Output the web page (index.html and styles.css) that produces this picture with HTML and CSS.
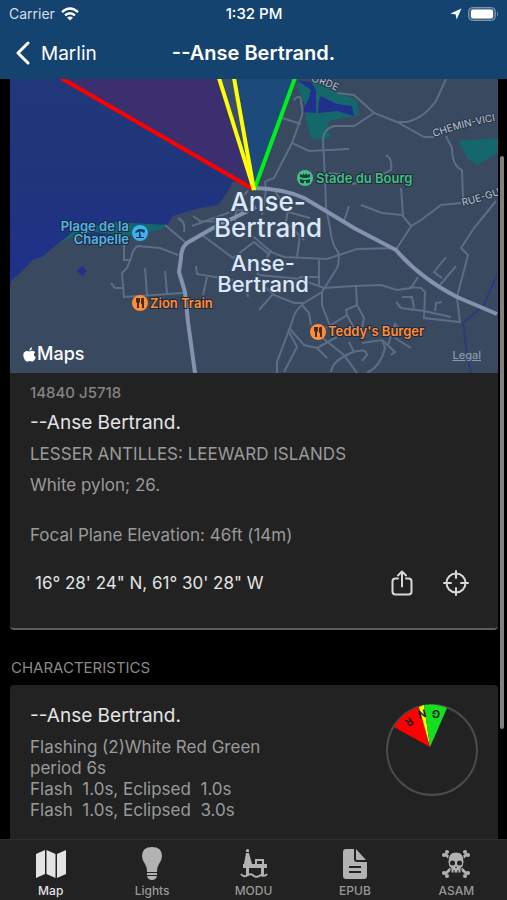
FILE: index.html
```
<!DOCTYPE html>
<html lang="en">
  <head>
    <meta charset="UTF-8" />
    <meta name="viewport" content="width=device-width, initial-scale=1.0" />
    <title>--Anse Bertrand.</title>
    <link rel="stylesheet" href="styles.css">
  </head>
  <body>
    <header>
      <div class="status-bar">
        <div class="carrier">
          <span>Carrier</span>
          <svg width="18" height="14" viewBox="0 0 18 14" fill="none" stroke="#fff" stroke-width="2.4">
            <path d="M1 5.2 Q9 -2 17 5.2" />
            <path d="M4 8.4 Q9 4 14 8.4" />
            <path d="M9 13.4 L6 10.6 Q9 8.4 12 10.6 Z" fill="#fff" stroke="none" />
          </svg>
        </div>
        <time>1:32 PM</time>
        <div class="status-icons">
          <svg width="12" height="12" viewBox="0 0 12 12" fill="#fff">
            <path d="M11.5 0.5 L6.6 11.6 L5.7 6.4 L0.4 5.6 Z" />
          </svg>
          <svg width="31" height="14" viewBox="0 0 31 14">
            <rect x="0.5" y="0.5" width="27" height="13" rx="4" fill="#466988" stroke="#7c95ac" />
            <rect x="3" y="2.5" width="22" height="9" rx="2" fill="#fff" />
            <path d="M29 4.5 Q31 7 29 9.5 Z" fill="#7c95ac" />
          </svg>
        </div>
      </div>
      <div class="title-bar">
        <a class="back" href="#">
          <svg width="14" height="24" viewBox="0 0 14 24" fill="none" stroke="#fff" stroke-width="3" stroke-linecap="round" stroke-linejoin="round">
            <path d="M12 2 L2 12 L12 22" />
          </svg>
          Marlin
        </a>
        <h1>--Anse Bertrand.</h1>
      </div>
    </header>

    <main>
      <section class="card light">
        <div class="map">
          <svg class="map-canvas" viewBox="10 79 488 294" preserveAspectRatio="xMidYMid slice">
            <defs>
              <linearGradient id="sea" x1="0" y1="0" x2="0" y2="1">
                <stop offset="0" stop-color="#203879" />
                <stop offset="0.5" stop-color="#1f357b" />
                <stop offset="1" stop-color="#20308c" />
              </linearGradient>
              <path id="chemin" d="M434 137 Q465 126 500 120" />
              <path id="rue" d="M463 206 Q480 202 502 194" />
              <path id="orde" d="M311 82 Q326 84 345 96" />
            </defs>
            <rect x="10" y="79" width="488" height="294" fill="#394a60" />
            <path fill="url(#sea)" d="M10 79 H296 L254 187 L233 181 L227 193 L218 205 L200 208 L183 213 L173 216 L167 225 L127 235 L72 236 L60 242 L42 257 L33 260 L20 273 L10 282 Z" />
            <path fill="#3b2f70" d="M62 79 H219 L254 190 Z" />
            <path fill="#384e70" d="M219 79 H234 L254 190 Z" />
            <path fill="#1c4a7a" d="M234 79 H294 L254 190 Z" />
            <path fill="#14676b" d="M113 222 L167 225 L160 230 L127 236 L95 232 L72 237 L58 244 L75 230 Z" />
            <path fill="#14676b" d="M296 84 L316 82 L337 93 L357 100 L359 115 L329 121 L327 131 L332 136 L322 140 L311 138 L306 121 L306 108 Z" />
            <path fill="#14676b" d="M459 141 L498 138 V153 L477 165 L467 158 Z" />
            <path fill="#20308c" d="M297 80 L311 82 L316 91 L316 113 L302 112 L309 98 L311 90 Z M321 96 L337 104 L352 106 L354 116 L337 111 L318 113 L319 100 Z M82 266 L87 271 L82 276 L77 271 Z" />
            <path fill="none" stroke="#283b7c" stroke-width="2" d="M496 277 L484 305 L463 323 L467 355 L471 373" />

            <g class="roads">
              <path d="M337 93 L354 95 L374 113 L397 122 L424 137 L434 137" stroke-width="3" />
              <path d="M446 79 L436 101 Q424 118 407 122 L397 122" stroke-width="3" />
              <path d="M374 113 L354 126 H334 Q323 129 323 141 L325 178 L326 208 L330 228 Q332 245 338 252 Q340 262 337 268 L322 292 L304 303 Q294 311 292 322 L277 362 V373" />
              <path d="M294 100 Q301 92 301 103 Q304 112 301 118 L292 143 L274 178 L266 181 M282 118 L301 124 M292 143 L309 151 L349 149" />
              <path d="M386 155 Q393 159 391 170 L381 175 M326 173 L340 174 M352 184 L368 181" />
              <path d="M446 136 L452 148 Q452 166 462 170 L463 198 M461 203 L441 205 L421 220 L411 226 L402 215 L382 213 L361 205 M401 188 L403 215 M349 206 L344 221" />
              <path d="M496 201 L474 228 L461 248 L468 255 L457 297 L460 322 L424 318 L425 292 L421 288 L409 287" />
              <path d="M412 225 L397 248 L357 249 L327 259 L284 257 L271 252 L254 237" />
              <path d="M324 288 L354 286 L381 285 L397 290 L411 288 L418 277" />
              <path d="M356 286 L357 305 L364 318 L362 328 M357 305 L346 310 L347 315 L326 328 M347 315 L354 328" />
              <path d="M322 292 L322 305 L330 326 M302 305 L309 313 L311 325 M289 328 L304 345 L317 348 L327 358 M289 332 L297 347 L284 372" />
              <path d="M317 348 L337 337 M320 336 L344 355 L357 373 M331 372 Q332 361 351 353 Q366 347 367 355 L362 361 M349 342 L354 352 M362 343 L382 340 L385 348 Q381 366 367 373 M382 340 L395 352 L391 355 M388 345 L395 324 L400 330 M411 348 L395 338" />
              <path d="M446 257 L434 272 L442 278 M456 266 L440 285 M402 297 L412 297 L414 308 M396 302 L401 308 L424 311 L451 317 M442 302 L436 303 L435 311" />
              <path d="M271 250 L257 275 M297 257 L300 235 M319 260 V285 M299 277 H319 M259 275 L300 279 L324 288 M262 284 L274 295 L294 303 H304 M274 293 L259 310" />
              <path d="M178 255 L160 248 L138 246 Q133 248 131 258 L127 268 L122 273 L124 297 L183 293 M145 268 L147 295 M165 271 L167 293 M124 245 V260 H130 M111 283 L115 288 H123" />
              <path d="M196 266 L197 274 L233 280 M207 277 L203 295 M165 225 L185 242 M202 235 L233 258 L254 242 L270 255 M178 218 Q186 222 184 232 M193 216 L200 221 L226 222 M192 226 L233 211 L253 209 M248 191 L237 201 L235 221 M246 285 L248 297" />
              <path d="M265 181 L266 190 L262 215 M275 191 L288 212 L310 218 M290 195 L286 222 L304 240" />
              <path class="main-road" d="M255 188 Q285 189 304 198 L326 211 L354 228 L396 250 Q420 278 457 297 L497 314" />
              <path class="main-road" d="M256 207 L213 228 L187 243 Q181 248 181 258 L179 272 L185 292 L188 322 L195 373" />
            </g>

            <g class="sectors">
              <path stroke="#ff0000" d="M61 78 L253 189" />
              <path stroke="#00ee1c" d="M295 78 L254 190" />
              <path stroke="#ffff00" d="M219 78 L254 190" />
              <path stroke="#ffff00" d="M234 78 L254 190" />
            </g>

            <g class="street">
              <text><textPath href="#orde">ORDE</textPath></text>
              <text><textPath href="#chemin">CHEMIN-VICI</textPath></text>
              <text><textPath href="#rue">RUE-GU</textPath></text>
            </g>
            <g class="town">
              <text x="268" y="211">Anse-</text>
              <text x="268" y="237">Bertrand</text>
              <text class="small" x="263" y="271">Anse-</text>
              <text class="small" x="263" y="292">Bertrand</text>
            </g>
            <g class="place">
              <text class="beach" x="129" y="231">Plage de la</text>
              <text class="beach" x="129" y="244">Chapelle</text>
              <text class="park" x="316" y="183">Stade du Bourg</text>
              <text class="food" x="150" y="308">Zion Train</text>
              <text class="food" x="328" y="336">Teddy's Burger</text>
            </g>
            <circle cx="140" cy="233" r="8" fill="#3eb0ee" />
            <path d="M135 233 Q137 227 145 230 Q145 232 144 233 L140 231 L141 237 H139 L139 232 Z M136 237 H144 V238 H136 Z" fill="#173a56" />
            <circle cx="305" cy="178" r="8" fill="#43c08a" />
            <path d="M300 177 V174 L303 175 V173 L305 175 L307 173 V175 L310 174 V177 Q305 179 300 177 Z M300 179 Q305 181 310 179 V182 Q308 184 306 183 V181 H304 V183 Q302 184 300 182 Z" fill="#153c36" />
            <g id="fork">
              <circle cx="140" cy="303" r="8" fill="#ff8d3b" />
              <path d="M136 298 H140 V302 L139 303 V308 H137 V303 L136 302 Z M141 299 Q142 297 144 298 V308 H142 V304 H141 Z" fill="#4a2c1c" />
            </g>
            <use href="#fork" x="178" y="29" />
          </svg>
          <div class="map-logo">
            <svg width="13" height="15" viewBox="0 0 13 15" fill="#fff">
              <path d="M9 0 Q9.2 3 6.3 3.8 Q6.2 1 9 0 Z M6.6 4.6 Q9.8 2.6 12.2 5.2 Q9.2 7.6 12.8 10.3 Q11 15 8.8 14.6 Q6.8 13.6 4.8 14.6 Q2.6 15 1 11.4 Q-1 5.6 2.6 4.2 Q4.2 3.6 6.6 4.6 Z" />
            </svg>
            Maps
          </div>
          <a class="legal" href="#">Legal</a>
        </div>
        <div class="details">
          <p class="feature">14840 J5718</p>
          <h2>--Anse Bertrand.</h2>
          <p>LESSER ANTILLES: LEEWARD ISLANDS</p>
          <p>White pylon; 26.</p>
          <p class="elevation">Focal Plane Elevation: 46ft (14m)</p>
          <div class="actions">
            <button class="coordinates">16° 28' 24" N, 61° 30' 28" W</button>
            <button aria-label="Share">
              <svg width="22" height="26" viewBox="0 0 22 26">
                <path d="M7 8.5 H4.5 Q1.5 8.5 1.5 11.5 V21.5 Q1.5 24.5 4.5 24.5 H17.5 Q20.5 24.5 20.5 21.5 V11.5 Q20.5 8.5 17.5 8.5 H15 M11 16.5 V2 M7 5.5 L11 1.5 L15 5.5" />
              </svg>
            </button>
            <button aria-label="Center on map">
              <svg width="26" height="26" viewBox="0 0 26 26">
                <circle cx="13" cy="13" r="9.5" />
                <path d="M13 1 V8 M13 18 V25 M1 13 H8 M18 13 H25" />
              </svg>
            </button>
          </div>
        </div>
      </section>

      <h3>CHARACTERISTICS</h3>
      <section class="card characteristics">
        <div>
          <h2>--Anse Bertrand.</h2>
          <p>Flashing (2)White Red Green
period 6s
Flash  1.0s, Eclipsed  1.0s
Flash  1.0s, Eclipsed  3.0s</p>
        </div>
        <svg class="sector-dial" width="92" height="92" viewBox="0 0 92 92">
          <circle cx="46" cy="46" r="45" fill="none" stroke="#4b4b4b" stroke-width="2" />
          <path d="M44 43 L8 23 Q17 8 33 3 Z" fill="#ff0000" />
          <path d="M44 43 L33 3 L38 1 Z" fill="#ffff00" />
          <path d="M44 43 L38 1 Q50 -1 61 4 Z" fill="#14e020" />
          <text y="4" transform="translate(23 18) rotate(145)">R</text>
          <text y="4" transform="translate(36 10) rotate(165)">N</text>
          <text y="4" transform="translate(50 10) rotate(186)">G</text>
        </svg>
      </section>
      <div class="scrollbar"></div>
    </main>

    <nav>
      <a class="active" href="#">
        <svg width="30" height="34" viewBox="0 0 30 34">
          <path d="M0 7 L9 3 V27 L0 31 Z M10.500 3 L19.500 7 V31 L10.500 27 Z M21 7 L30 3 V27 L21 31 Z" />
        </svg>
        Map
      </a>
      <a href="#">
        <svg width="20" height="34" viewBox="0 0 20 34">
          <path d="M10 0 Q20 0 20 9 Q20 13 17 17 Q15 20 15 25 H5 Q5 20 3 17 Q0 13 0 9 Q0 0 10 0 Z M5 26 H15 V28 H5 Z M5 29 H15 Q14 33 10 33 Q6 33 5 29 Z" />
        </svg>
        Lights
      </a>
      <a href="#">
        <svg width="30" height="34" viewBox="0 0 30 34">
          <path d="M7 3 Q9 1 10 3 L10 5 H7 Z M7 6 H10 L13 17 H16 V12 H25 V17 H28 V21 H25 V28 H22 V21 H10 V28 H7 V21 H4 V17 H5 Z M18 14 V17 H23 V14 Z" fill-rule="evenodd" />
          <path d="M2 27 Q5 31 9 28 Q12 26 15 29 Q18 31 22 28 Q26 30 28 27" fill="none" stroke="#b2b2b2" stroke-width="2" />
        </svg>
        MODU
      </a>
      <a href="#">
        <svg width="24" height="34" viewBox="0 0 24 34">
          <path d="M3 2 H11 V12 Q11 15 14 15 H24 V29 Q24 32 21 32 H3 Q0 32 0 29 V5 Q0 2 3 2 Z M13 2 L23 13 H14 Q13 13 13 12 Z M6 19 V21 H18 V19 Z M6 24 V26 H18 V24 Z" fill-rule="evenodd" />
        </svg>
        EPUB
      </a>
      <a href="#">
        <svg width="30" height="34" viewBox="0 0 30 34">
          <path d="M4 7 L26 27 M26 7 L4 27" stroke="#b2b2b2" stroke-width="3" />
          <circle cx="3" cy="8" r="2" /><circle cx="6" cy="5" r="2" />
          <circle cx="27" cy="8" r="2" /><circle cx="24" cy="5" r="2" />
          <circle cx="3" cy="26" r="2" /><circle cx="6" cy="29" r="2" />
          <circle cx="27" cy="26" r="2" /><circle cx="24" cy="29" r="2" />
          <path d="M15 5 Q23 5 23 15 Q23 20 20 21 V26 H10 V21 Q7 20 7 15 Q7 5 15 5 Z" stroke="#222" stroke-width="1" />
          <circle cx="11.500" cy="16" r="2.500" fill="#222" /><circle cx="18.500" cy="16" r="2.500" fill="#222" />
          <path d="M15 19 L16 21 H14 Z M12.500 23 H13.500 V26 H12.500 Z M16.500 23 H17.500 V26 H16.500 Z" fill="#222" />
        </svg>
        ASAM
      </a>
    </nav>
  </body>
</html>
```
FILE: styles.css
```
* {
  box-sizing: border-box;
}
body {
  display: flex;
  flex-direction: column;
  height: 100vh;
  margin: 0;
  overflow: hidden;
  font-family: Inter, "Liberation Sans", sans-serif;
  background: #000;
  color: #e4e4e4;
}
h1,
h2,
h3,
p {
  margin: 0;
  font-weight: 400;
}
a {
  color: inherit;
  text-decoration: none;
}
svg {
  display: block;
}
header {
  background: #15436f;
  color: #fff;
}
.status-bar {
  display: grid;
  grid-template-columns: 1fr auto 1fr;
  align-items: center;
  height: 27px;
  padding: 0 8px 0 9px;
  font-size: 14px;
}
.carrier,
.status-icons {
  display: flex;
  align-items: center;
  gap: 6px;
}
.carrier {
  color: #d5dfe8;
}
.status-icons {
  justify-content: flex-end;
}
.status-bar time {
  font-size: 15px;
  font-weight: 500;
}
.title-bar {
  display: grid;
  grid-template-columns: 1fr auto 1fr;
  align-items: center;
  height: 52px;
  padding: 0 16px;
}
.back {
  display: flex;
  align-items: center;
  gap: 11px;
  font-size: 19px;
}
h1 {
  font-size: 20px;
  font-weight: 600;
}
main {
  position: relative;
  flex: 1;
  min-height: 0;
  padding: 0 9px 0 10px;
  overflow: hidden;
}
.card {
  background: #222;
  border-radius: 4px;
  border-bottom: 2px solid #5c5c5c;
  overflow: hidden;
}
.light {
  border-radius: 0 0 4px 4px;
}
.map {
  position: relative;
  height: 294px;
}
.map-canvas {
  width: 100%;
  height: 100%;
}
.roads path {
  fill: none;
  stroke: #5d6d86;
  stroke-width: 2;
}
.roads .main-road {
  stroke: #8592ae;
  stroke-width: 4;
}
.sectors path {
  stroke-width: 4;
}
.street {
  font-size: 10px;
  fill: #b9c3d6;
  stroke: #2c394b;
  stroke-width: 2;
  paint-order: stroke;
}
.town {
  font-size: 26px;
  font-weight: 500;
  fill: #dce8fa;
  stroke: #394a60;
  stroke-width: 3;
  paint-order: stroke;
  text-anchor: middle;
}
.town .small {
  font-size: 22px;
}
.place {
  font-size: 13px;
  font-weight: 600;
  stroke: #1f2a38;
  stroke-width: 2;
  paint-order: stroke;
}
.beach {
  fill: #4fb4ea;
  text-anchor: end;
}
.park {
  fill: #45bd84;
}
.food {
  fill: #ff8d3b;
}
.map-logo {
  position: absolute;
  left: 13px;
  bottom: 9px;
  display: flex;
  align-items: center;
  gap: 1px;
  font-size: 18px;
  line-height: 20px;
  font-weight: 500;
  color: #fff;
}
.legal {
  position: absolute;
  right: 17px;
  bottom: 11px;
  font-size: 11px;
  font-weight: 500;
  color: #8d98a8;
  text-decoration: underline;
}
.details {
  padding: 9px 20px 32px;
}
.details p,
.characteristics p {
  font-size: 17px;
  line-height: 21px;
  color: #9a9a9a;
}
.details p {
  margin-bottom: 10px;
}
.details .feature {
  font-size: 15px;
  font-weight: 500;
  color: #848484;
  margin-bottom: 8px;
}
h2 {
  font-size: 19px;
  line-height: 24px;
  margin-bottom: 9px;
}
.details .elevation {
  margin: 29px 0 24px;
}
.actions {
  display: flex;
  align-items: center;
  gap: 30px;
  padding-right: 9px;
}
.actions button {
  padding: 0;
  border: none;
  background: none;
  color: #e4e4e4;
  font: inherit;
  cursor: pointer;
}
.actions .coordinates {
  margin-right: auto;
  padding-left: 5px;
  font-size: 17px;
}
.actions svg {
  fill: none;
  stroke: #d8d8d8;
  stroke-width: 2;
  stroke-linecap: round;
  stroke-linejoin: round;
}
h3 {
  padding: 28px 1px 7px;
  font-size: 15px;
  line-height: 20px;
  color: #8a8a8a;
}
.characteristics {
  display: flex;
  justify-content: space-between;
  height: 200px;
  padding: 19px 20px;
}
.characteristics p {
  white-space: pre;
}
.sector-dial text {
  font-size: 11px;
  font-weight: 700;
  fill: #222;
  text-anchor: middle;
}
.scrollbar {
  position: absolute;
  top: 77px;
  right: 3px;
  width: 4px;
  height: 573px;
  border-radius: 2px;
  background: #808080;
}
nav {
  display: flex;
  height: 61px;
  padding-top: 7px;
  border-top: 1px solid #2e2e2e;
  background: #222;
}
nav a {
  display: flex;
  flex: 1;
  flex-direction: column;
  align-items: center;
  gap: 2px;
  font-size: 12px;
  font-weight: 500;
  color: #999;
}
nav svg {
  fill: #b2b2b2;
}
nav .active {
  color: #e4e4e4;
}
nav .active svg {
  fill: #e4e4e4;
}
```
